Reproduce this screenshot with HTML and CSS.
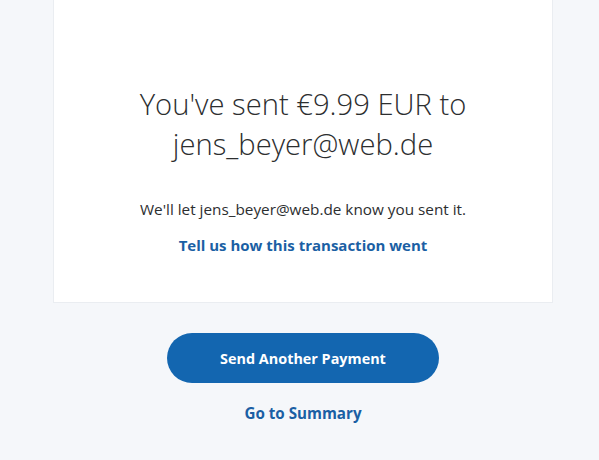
FILE: index.html
```html
<!DOCTYPE html>
<html>
<head>
<meta charset="utf-8">
<link rel="stylesheet" href="styles.css">
</head>
<body>
<div class="page">
  <div class="card">
    <h1 class="title">You've sent €9.99 EUR to<br>jens_beyer@web.de</h1>
    <p class="note">We'll let jens_beyer@web.de know you sent it.</p>
    <a class="feedback" href="#">Tell us how this transaction went</a>
  </div>
  <div class="actions">
    <a class="primary" href="#">Send Another Payment</a>
    <a class="secondary" href="#">Go to Summary</a>
  </div>
</div>
</body>
</html>
```
FILE: styles.css
```css
html, body {
  margin: 0;
  padding: 0;
  background: #f5f7fa;
  font-family: "Open Sans", "Liberation Sans", sans-serif;
  color: #2c2e2f;
}
.page {
  width: 599px;
  height: 460px;
  padding: 0 46px 0 53px;
  box-sizing: border-box;
  overflow: hidden;
}
.card {
  background: #fff;
  border: 1px solid #eaedf1;
  border-top: none;
  height: 303px;
  box-sizing: border-box;
  display: flex;
  flex-direction: column;
  align-items: center;
  padding-top: 84px;
}
.title {
  margin: 0;
  font-weight: 300;
  font-size: 29.2px;
  line-height: 40px;
  text-align: center;
  color: #2c2e2f;
}
.note {
  margin: 35px 0 0;
  font-size: 15.3px;
  line-height: 20px;
}
.feedback {
  margin-top: 16px;
  font-size: 15px;
  line-height: 20px;
  font-weight: 700;
  color: #1b5fa4;
  text-decoration: none;
}
.actions {
  display: flex;
  flex-direction: column;
  align-items: center;
  padding-top: 30px;
}
.primary {
  width: 272px;
  height: 50px;
  border-radius: 25px;
  background: #1366b0;
  color: #fff;
  font-weight: 700;
  font-size: 14.4px;
  display: flex;
  align-items: center;
  justify-content: center;
  text-decoration: none;
}
.secondary {
  margin-top: 20px;
  font-weight: 700;
  font-size: 15.2px;
  line-height: 20px;
  color: #1b5fa4;
  text-decoration: none;
}
```
